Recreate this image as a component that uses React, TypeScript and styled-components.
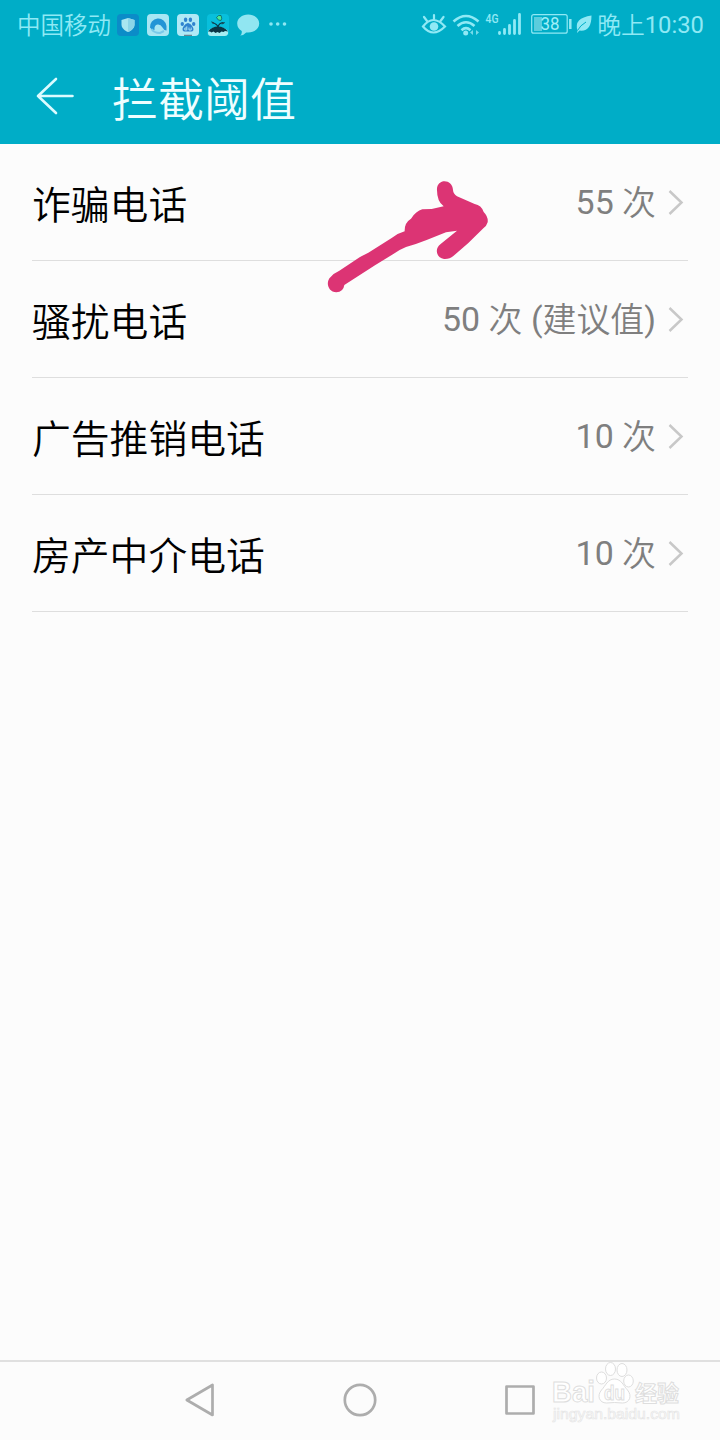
import React from 'react';
import styled, { createGlobalStyle } from 'styled-components';

const GlobalStyle = createGlobalStyle`
  * { box-sizing: border-box; }
  body {
    margin: 0;
    background: #fcfcfc;
    font-family: Roboto, "Noto Sans CJK SC", sans-serif;
  }
  svg { display: block; flex: none; }
`;

const Screen = styled.div`
  position: relative;
  display: flex;
  flex-direction: column;
  width: 720px;
  height: 1440px;
  overflow: hidden;
  background: #fcfcfc;
`;

const Header = styled.header`
  height: 144px;
  flex: none;
  background: #00adc7;
`;

const StatusBar = styled.div`
  display: flex;
  justify-content: space-between;
  align-items: center;
  height: 48px;
  padding: 2px 16px 0 17px;
  color: #8fe9f5;
`;

const StatusGroup = styled.div<{ $gap: number }>`
  display: flex;
  align-items: center;
  gap: ${p => p.$gap}px;
`;

const StatusText = styled.span<{ $size: number }>`
  font-size: ${p => p.$size}px;
  line-height: 44px;
  white-space: nowrap;
`;

const Han = styled.span<{ $drop: number }>`
  display: inline-block;
  font-weight: 350;
  line-height: 1;
  vertical-align: -${p => p.$drop}px;
`;

const AppIcons = styled.div`
  display: flex;
  align-items: center;
  gap: 8px;
  margin-left: -2px;
`;

const TitleBar = styled.div`
  display: flex;
  align-items: center;
  height: 96px;
  padding-left: 36px;
  gap: 38px;
`;

const Title = styled.h1`
  margin: 8px 0 0;
  font-size: 46px;
  font-weight: 350;
  line-height: 60px;
  color: #effeff;
`;

const List = styled.main`
  flex: 1;
  padding: 0 32px;
`;

const Row = styled.div`
  display: flex;
  align-items: center;
  height: 117px;
  padding-right: 3px;
  border-bottom: 1px solid #dedede;
`;

const Label = styled.span`
  flex: 1;
  padding-top: 8px;
  font-size: 38.8px;
  font-weight: 350;
  line-height: 60px;
  color: #000000;
`;

const Value = styled.span`
  padding-top: 2px;
  font-size: 33.9px;
  line-height: 50px;
  margin-right: 12px;
  color: #7f7f7f;
  white-space: nowrap;
`;

const NavBar = styled.nav`
  display: flex;
  align-items: center;
  gap: 124px;
  height: 80px;
  flex: none;
  padding: 0 0 2px 182px;
  border-top: 2px solid #e0e0e0;
`;

const Annotation = styled.svg`
  position: absolute;
  left: 320px;
  top: 170px;
`;

const Watermark = styled.svg`
  position: absolute;
  left: 540px;
  top: 1350px;
`;

const MixedText = ({ text, drop }: { text: string; drop: number }) => (
  <>
    {text.split(/([\u4e00-\u9fff]+)/).map((part, i) =>
      i % 2 === 1 ? <Han key={i} $drop={drop}>{part}</Han> : part,
    )}
  </>
);

const ShieldIcon = () => (
  <svg width="22" height="22" viewBox="0 0 22 22">
    <rect width="22" height="22" rx="4" fill="#0b8cc8" />
    <path d="M11 4l6.500 2v4.500c0 3.500-3 6-6.500 7.500C7.500 16.500 4.500 14 4.500 10.500V6z" fill="#a9e6f0" />
    <path d="M11 4l6.500 2v4.500c0 3.500-3 6-6.500 7.500z" fill="#8bd5e8" />
  </svg>
);

const BrowserIcon = () => (
  <svg width="22" height="22" viewBox="0 0 22 22">
    <rect width="22" height="22" rx="4" fill="#a8e6f3" />
    <path d="M3 13.500A8.200 8.200 0 0 1 19.500 12v4.500q-2.500 0-4-3-2-3.500-5-3-3.500.5-3 5.500-3 0-4.500-2.500z" fill="#2295d6" />
    <path d="M4.500 15q2.500 4 8.500 4l4-2" stroke="#79c9e9" strokeWidth="2" fill="none" />
  </svg>
);

const PawIcon = () => (
  <svg width="22" height="22" viewBox="0 0 22 22">
    <rect width="22" height="22" rx="4" fill="#b0e9f6" />
    <g fill="#2f83cf">
      <ellipse cx="5.300" cy="10" rx="1.700" ry="2.100" />
      <ellipse cx="8.600" cy="5.800" rx="1.700" ry="2.300" />
      <ellipse cx="13.400" cy="5.800" rx="1.700" ry="2.300" />
      <ellipse cx="16.700" cy="10" rx="1.700" ry="2.100" />
      <path d="M11 9c2 0 5.500 3.800 5.500 6.200 0 2.800-2.700 2.300-5.500 2.300s-5.500.5-5.500-2.300C5.500 12.800 9 9 11 9z" />
    </g>
    <path d="M9.800 12.300v3.700h-2v-2h2M12 13.500v2.500h2.200v-2.500" stroke="#b0e9f6" fill="none" strokeWidth=".9" />
    <path d="M7 21.300h8" stroke="#586a77" />
  </svg>
);

const SproutIcon = () => (
  <svg width="22" height="22" viewBox="0 0 22 22">
    <rect width="22" height="22" rx="4" fill="#08bfdc" />
    <path d="M1 17q4-4 10-4t10 4v3q-1 2-3 2H4q-3 0-3-3z" fill="#a6edf2" />
    <path d="M1 17.500q4-5 10-5t10 5l-3-.5-1.500 1-2-.5-2 1.500-2-1-2 1-2-1.500-2 1-1.500-1z" fill="#093646" />
    <path d="M11 13q-1-3-5.500-4.500M11 13q1-4 5-4.500" stroke="#093646" fill="none" strokeWidth="1.200" />
    <path d="M4 7.500q3-.5 3.500 2.500Q5 10 4 7.500zM18 8q-3-.5-4 2 3 1 4-2z" fill="#17505c" />
    <path d="M9.500 3.500q2-3 4.500-2 1.500 3 0 5-3 .5-4.500-3z" fill="#49e993" stroke="#08535d" strokeWidth=".7" />
  </svg>
);

const BubbleIcon = () => (
  <svg width="24" height="22" viewBox="0.8 0 24 22">
    <path d="M12 .5c6.300 0 11 3.900 11 9s-4.700 9-11 9h-2Q8 21 4 21.500q2-1.500 1.500-4.500Q1 14 1 9.500c0-5 4.700-9 11-9z" fill="#91e6f1" />
  </svg>
);

const DotsIcon = () => (
  <svg width="18" height="22" viewBox="0 0 18 22" fill="#8ee7f3">
    <circle cx="2" cy="10" r="1.800" />
    <circle cx="8.700" cy="10" r="1.800" />
    <circle cx="15.500" cy="10" r="1.800" />
  </svg>
);

const SignalIcons = () => (
  <svg width="172" height="30" viewBox="0 0 172 30" fill="none" stroke="#90e9f5">
    <g strokeWidth="2.200" strokeLinecap="round">
      <path d="M2 16.500Q12 3.500 24 16.500Q12 28.500 2 16.500z" />
      <path d="M13 9V5M6 11L3 7M19.500 11l3-4" />
    </g>
    <circle cx="13" cy="16.500" r="4.300" fill="#90e9f5" stroke="none" />
    <g strokeWidth="2.600">
      <path d="M32.500 11.500Q45 .5 57.500 11.500M36.500 16q8.500-7.500 17 0M40.500 20.200q4.500-4 9 0" />
    </g>
    <circle cx="44.700" cy="23" r="2.500" fill="#90e9f5" stroke="none" />
    <path d="M52 20v5l-3-2.500zM55 20v5l3-2.500z" fill="#75dbea" stroke="none" />
    <text x="64.500" y="12.800" fontFamily="Roboto" fontSize="13" fontWeight="500" fill="#90e9f5" stroke="none" textLength="13" lengthAdjust="spacingAndGlyphs">4G</text>
    <g strokeWidth="2.800" strokeLinecap="round">
      <path d="M78.500 23.500v-1M83.500 23.500v-4M88.500 23.500v-8M93.500 23.500v-13M98.500 23.500V4.500" />
    </g>
    <rect x="110.700" y="4.700" width="35.500" height="18.500" rx="2" strokeWidth="1.200" />
    <rect x="113" y="7" width="8" height="14" fill="#5bcddd" stroke="none" />
    <text x="119.500" y="20" fontFamily="Roboto" fontSize="18.500" fill="#a0eff8" stroke="none" textLength="19" lengthAdjust="spacingAndGlyphs">38</text>
    <path d="M149.300 9v10" strokeWidth="2.500" />
    <path d="M156.500 20.500Q152.500 8 170.500 5.500Q170.500 22 158.500 20.500L156 23z" fill="#90e9f5" stroke="none" />
    <path d="M156.500 20.500Q159 15.500 165 12" stroke="#00adc7" strokeWidth="1" />
  </svg>
);

const BackArrow = () => (
  <svg width="38" height="40" viewBox="0 0 38 40" fill="none" stroke="#dcfbff" strokeWidth="2.600" strokeLinecap="round" strokeLinejoin="round">
    <path d="M36.500 20H2M20 3L2 20l18 17" />
  </svg>
);

const Chevron = () => (
  <svg width="17" height="28" viewBox="0 0 17 28" fill="none" stroke="#c8c8c8" strokeWidth="2.500">
    <path d="M1.500 3L13.500 14.500 1.500 26" />
  </svg>
);

const rows = [
  { label: '诈骗电话', value: '55 次' },
  { label: '骚扰电话', value: '50 次 (建议值)' },
  { label: '广告推销电话', value: '10 次' },
  { label: '房产中介电话', value: '10 次' },
];

export default function App() {
  return (
    <Screen>
      <GlobalStyle />
      <Header>
        <StatusBar>
          <StatusGroup $gap={8}>
            <StatusText $size={23.5}><MixedText text="中国移动" drop={1} /></StatusText>
            <AppIcons>
              <ShieldIcon />
              <BrowserIcon />
              <PawIcon />
              <SproutIcon />
              <BubbleIcon />
              <DotsIcon />
            </AppIcons>
          </StatusGroup>
          <StatusGroup $gap={4}>
            <SignalIcons />
            <StatusText $size={23.8}><MixedText text="晚上10:30" drop={1} /></StatusText>
          </StatusGroup>
        </StatusBar>
        <TitleBar>
          <BackArrow />
          <Title>拦截阈值</Title>
        </TitleBar>
      </Header>
      <List>
        {rows.map(row => (
          <Row key={row.label}>
            <Label>{row.label}</Label>
            <Value><MixedText text={row.value} drop={1} /></Value>
            <Chevron />
          </Row>
        ))}
      </List>
      <NavBar>
        <svg width="36" height="36" viewBox="0 0 36 36" fill="none" stroke="#adadad" strokeWidth="2.700" strokeLinejoin="round">
          <path d="M30.500 3v30L4.800 18z" />
        </svg>
        <svg width="36" height="36" viewBox="0 0 36 36" fill="none" stroke="#adadad" strokeWidth="2.700">
          <circle cx="18" cy="18" r="15.200" />
        </svg>
        <svg width="36" height="36" viewBox="0 0 36 36" fill="none" stroke="#adadad" strokeWidth="2.700" strokeLinejoin="round">
          <rect x="4.500" y="4.500" width="27" height="27" />
        </svg>
      </NavBar>
      <Annotation width="180" height="130" viewBox="0 0 540 390">
        <path
          d="M351 61C348 25 398 25 399 60Q400 72 411 79L464 102Q484 105 491 126Q505 140 503 157Q500 168 490 175L445 219L400 258Q389 268 372 267C347 263 344 234 362 222L411 182L378 187L320 210Q290 222 258 231Q240 238 220 252L165 286L73 345Q70 366 49 367C23 365 16 335 32 321Q42 309 58 302L120 261L145 248L215 204Q235 189 254 184Q253 158 273 146Q288 123 307 118L335 117L371 109Q351 95 351 61z"
          fill="#dc3474"
        />
      </Annotation>
      <Watermark width="180" height="90" viewBox="0 0 180 90" fill="#ffffff" stroke="#dedede" strokeWidth="1">
        <text x="12" y="52" fontFamily="Liberation Sans" fontSize="29" fontWeight="700" textLength="43" lengthAdjust="spacingAndGlyphs">Bai</text>
        <ellipse cx="61.500" cy="28" rx="5" ry="6" />
        <ellipse cx="70.500" cy="19" rx="5" ry="6.500" />
        <ellipse cx="82" cy="20" rx="5" ry="6.500" />
        <ellipse cx="88.500" cy="31" rx="4.800" ry="6" />
        <path d="M74.500 29c7 0 9 7 13 11 5 6 2 13-5 13q-8-1-16 0c-7 0-10-7-5-13 4-4 6-11 13-11z" />
        <text x="64" y="50" fontFamily="Liberation Sans" fontSize="20" fontWeight="700" textLength="21" lengthAdjust="spacingAndGlyphs">du</text>
        <text x="95" y="51" fontFamily="Noto Sans CJK SC" fontSize="22" fontWeight="700" textLength="44" lengthAdjust="spacingAndGlyphs">经验</text>
        <text x="13" y="68.500" fontFamily="Liberation Sans" fontSize="14" strokeWidth=".6" stroke="#e4e4e4" textLength="127" lengthAdjust="spacingAndGlyphs">jingyan.baidu.com</text>
      </Watermark>
    </Screen>
  );
}
